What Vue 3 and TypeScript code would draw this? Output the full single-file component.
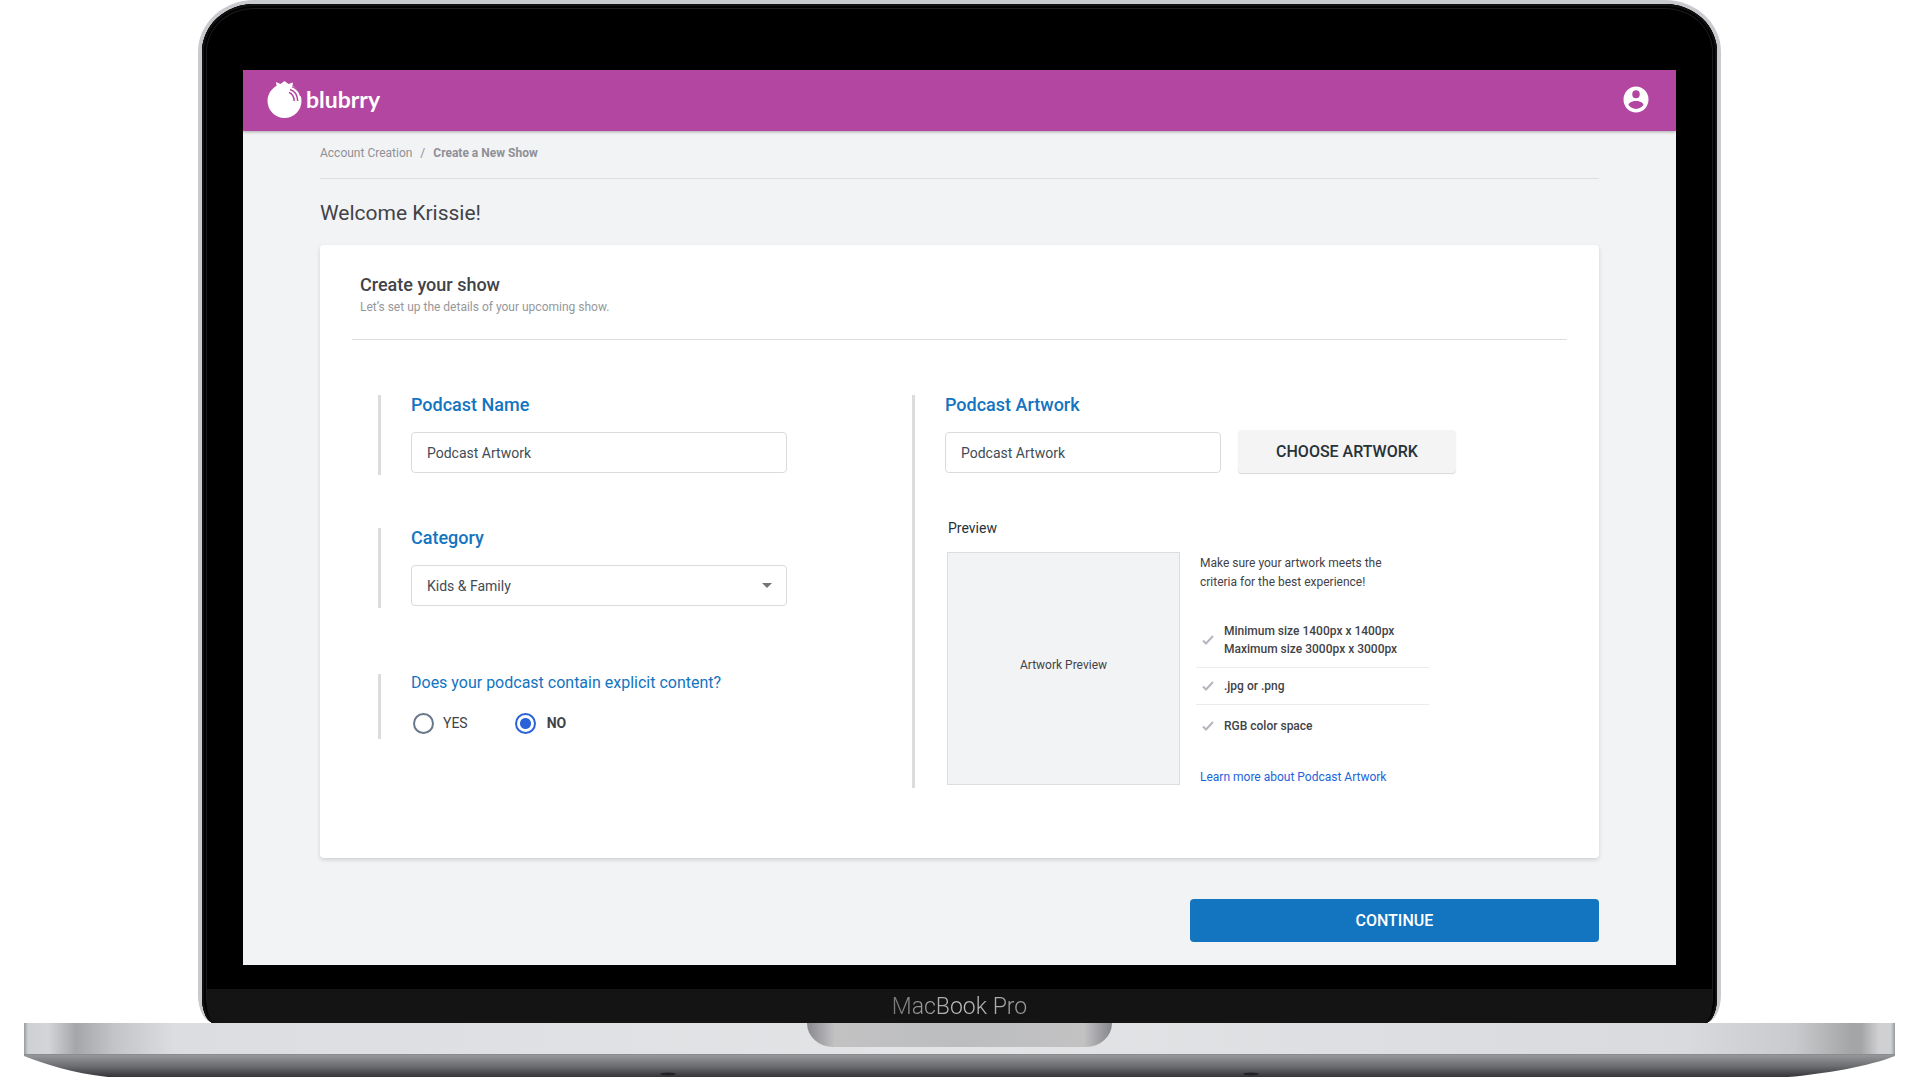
<script setup lang="ts">
import { ref } from 'vue'

interface Criterion {
  lines: string[]
}

const podcastName = ref('Podcast Artwork')
const artworkFile = ref('Podcast Artwork')
const category = ref('Kids & Family')
const explicit = ref<'yes' | 'no'>('no')

const categories: string[] = ['Kids & Family', 'Arts', 'Business', 'Comedy', 'Education']
const criteria: Criterion[] = [
  { lines: ['Minimum size 1400px x 1400px', 'Maximum size 3000px x 3000px'] },
  { lines: ['.jpg or .png'] },
  { lines: ['RGB color space'] },
]
</script>

<template>
  <div class="stage">
    <div class="lid">
      <div class="bezel">
        <div class="screen">
          <header class="topbar">
            <a class="brand" href="#" aria-label="blubrry">
              <svg class="berry" viewBox="0 0 35 37" aria-hidden="true">
                <circle cx="17.5" cy="20" r="17" fill="#fff" />
                <path d="M9 1 L13.500 3 L17.500 0 L21.500 3 L26 1.500 L25 8 L10 8 Z" fill="#fff" />
                <g fill="none" stroke="#b246a1" stroke-width="1.500">
                  <path d="M22 11.500 C25 12.500 27 16 27.200 20" />
                  <path d="M23 8.500 C28 10 30.500 14.500 30.700 20" />
                  <path d="M25 5.800 C29.500 7.500 32.500 11 33.600 15" stroke-width="1.200" />
                </g>
              </svg>
              <span class="wordmark">blubrry</span>
            </a>
            <button class="account" type="button" aria-label="Account">
              <svg viewBox="0 0 24 24" aria-hidden="true">
                <path
                  fill="#fff"
                  fill-rule="evenodd"
                  d="M12 2a10 10.400 0 1 0 0 20.800a10 10.400 0 1 0 0-20.800z M12 5a3 3.200 0 1 1 0 6.400a3 3.200 0 1 1 0-6.400z M12 13.600c3.200 0 6 1.500 6 3.200c-1.300 1.900-3.500 3.100-6 3.100s-4.700-1.200-6-3.100c0-1.700 2.800-3.200 6-3.200z"
                />
              </svg>
            </button>
          </header>

          <main class="content">
            <nav class="crumbs" aria-label="Breadcrumb">
              <a href="#">Account Creation</a>
              <span>/</span>
              <strong>Create a New Show</strong>
            </nav>
            <h1>Welcome Krissie!</h1>

            <form id="show-form" class="card" @submit.prevent>
              <div class="card-head">
                <h2>Create your show</h2>
                <p>Let’s set up the details of your upcoming show.</p>
              </div>

              <div class="columns">
                <div class="left">
                  <section class="group">
                    <label class="title" for="name">Podcast Name</label>
                    <input id="name" v-model="podcastName" class="field" type="text" />
                  </section>

                  <section class="group">
                    <label class="title" for="category">Category</label>
                    <div class="select">
                      <select id="category" v-model="category" class="field">
                        <option v-for="item in categories" :key="item">{{ item }}</option>
                      </select>
                      <svg viewBox="0 0 10 5" aria-hidden="true"><path d="M0 0h10L5 5z" fill="#757575" /></svg>
                    </div>
                  </section>

                  <fieldset class="group question">
                    <legend>Does your podcast contain explicit content?</legend>
                    <div class="radios">
                      <label><input v-model="explicit" type="radio" name="explicit" value="yes" />YES</label>
                      <label class="strong"><input v-model="explicit" type="radio" name="explicit" value="no" />NO</label>
                    </div>
                  </fieldset>
                </div>

                <section class="artwork">
                  <label class="title" for="artwork">Podcast Artwork</label>
                  <div class="chooser">
                    <input id="artwork" v-model="artworkFile" class="field" type="text" />
                    <button class="choose" type="button">CHOOSE ARTWORK</button>
                  </div>
                  <h3>Preview</h3>
                  <div class="preview-row">
                    <div class="preview">Artwork Preview</div>
                    <div class="criteria">
                      <p>Make sure your artwork meets the criteria for the best experience!</p>
                      <ul>
                        <li v-for="item in criteria" :key="item.lines[0]">
                          <svg viewBox="0 0 12 10" aria-hidden="true">
                            <path d="M1 5.500 L4 8.500 L11 1" fill="none" stroke="#b5b5c0" stroke-width="2" />
                          </svg>
                          <span><span v-for="line in item.lines" :key="line" class="line">{{ line }}</span></span>
                        </li>
                      </ul>
                      <a href="#">Learn more about Podcast Artwork</a>
                    </div>
                  </div>
                </section>
              </div>
            </form>

            <div class="actions">
              <button class="continue" type="submit" form="show-form">CONTINUE</button>
            </div>
          </main>
        </div>
        <div class="chin"><span>MacBook Pro</span></div>
      </div>
    </div>

    <div class="base">
      <div class="deck"><div class="notch"></div></div>
      <svg class="underside" viewBox="0 0 1871 22" preserveAspectRatio="none" aria-hidden="true">
        <defs>
          <linearGradient id="under" x1="0" y1="0" x2="0" y2="1">
            <stop offset="0" stop-color="#96979b" />
            <stop offset="0.500" stop-color="#6d6e72" />
            <stop offset="1" stop-color="#353538" />
          </linearGradient>
        </defs>
        <path d="M0 0 H1871 V1 C1846 11 1800 19 1764 22 H84 C48 18 20 9 0 1 Z" fill="url(#under)" />
        <ellipse cx="644" cy="19" rx="8" ry="1.500" fill="#222326" />
        <ellipse cx="1227" cy="19" rx="8" ry="1.500" fill="#222326" />
      </svg>
    </div>
  </div>
</template>

<style>
body {
  margin: 0;
  background: #fff;
}
</style>

<style scoped>
.stage {
  min-height: 100vh;
  overflow: hidden;
  font-family: Roboto, "Liberation Sans", sans-serif;
  font-size: 12px;
  color: #424347;
}
.stage *,
.stage *::before {
  box-sizing: border-box;
}
h1, h2, h3, p, ul, fieldset, legend {
  margin: 0;
  padding: 0;
}
a {
  text-decoration: none;
}
button, input, select {
  font-family: inherit;
}

/* laptop shell */
.lid {
  margin: 0 199px 0 198px;
  padding: 4px 4px 0;
  border-radius: 56px 56px 16px 16px / 52px 52px 28px 28px;
  background: #c9cace;
}
.bezel {
  overflow: hidden;
  padding-top: 66px;
  border-radius: 52px 52px 12px 12px / 48px 48px 26px 26px;
  background: #000;
  box-shadow: inset 0 0 0 2px #111, inset 0 0 0 4px #000, inset 0 0 0 5px #1c1c1e;
}
.screen {
  margin: 0 41px 24px;
  background: #f2f3f5;
}
.chin {
  display: flex;
  justify-content: center;
  margin: 0 5px;
  height: 34px;
  border-radius: 0 0 10px 10px / 0 0 16px 16px;
  background: #141414;
  font-size: 23px;
  font-weight: 300;
  line-height: 36px;
}
.chin span {
  background: linear-gradient(90deg, #777, #c4c4c4 50%, #999);
  background-clip: text;
  color: transparent;
}
.base {
  margin: 0 25px 0 24px;
}
.deck {
  display: flex;
  justify-content: center;
  height: 32px;
  border-bottom: 1px solid #8a8b8e;
  background: linear-gradient(90deg, #999a9e 0, #cfd0d3 4px, #d4d5d8 24px, #a5a6aa 52px, #c3c4c8 90px, #dcdde0 150px, #e3e4e6 50%, #d9dadd calc(100% - 210px), #c9cacd calc(100% - 100px), #a4a5a6 calc(100% - 44px), #a4a5a6 calc(100% - 34px), #d0d0d3 calc(100% - 16px), #cfd0d3 calc(100% - 4px), #97989c 100%);
}
.notch {
  width: 305px;
  height: 24px;
  border-radius: 0 0 26px 26px / 0 0 24px 24px;
  background: linear-gradient(90deg, #88888e, #c2c2c3 28px, #bcbdbf 50%, #c2c2c3 calc(100% - 28px), #85858c);
}
.underside {
  display: block;
  width: 100%;
  height: 22px;
}

/* app header */
.topbar {
  display: flex;
  align-items: center;
  justify-content: space-between;
  height: 61px;
  padding: 0 25px 3px 24px;
  background: #b246a1;
  box-shadow: 0 1px 3px rgba(0, 0, 0, 0.3);
}
.brand {
  display: flex;
  align-items: center;
  gap: 4px;
  color: #fff;
}
.berry {
  width: 35px;
  height: 37px;
}
.wordmark {
  font: 700 23px/28px Lato, sans-serif;
}
.account {
  display: flex;
  padding: 0;
  border: 0;
  background: none;
}
.account svg {
  width: 30px;
  height: 30px;
}

/* page */
.content {
  padding: 12px 77px 23px;
}
.crumbs {
  display: flex;
  gap: 8px;
  padding-bottom: 15px;
  border-bottom: 1px solid #dedfe2;
  line-height: 20px;
  color: #8f9095;
}
.crumbs a {
  color: inherit;
}
h1 {
  margin: 20px 0 18px;
  font-size: 21px;
  font-weight: 400;
  line-height: 28px;
}
.card {
  padding: 28px 32px 70px;
  border-radius: 4px;
  background: #fff;
  box-shadow: 0 2px 4px rgba(0, 0, 0, 0.14);
}
.card-head {
  padding: 0 8px 24px;
  border-bottom: 1px solid #dcdddf;
}
h2 {
  font-size: 18px;
  font-weight: 500;
  line-height: 24px;
}
.card-head p {
  margin-top: 2px;
  line-height: 16px;
  color: #96979c;
}
.columns {
  display: grid;
  grid-template-columns: 534fr 629fr;
  align-items: start;
  padding: 55px 26px 0;
}
.group,
.artwork {
  border: 0 solid #dcdcdd;
  border-left-width: 3px;
}
.group {
  margin-bottom: 53px;
  padding: 0 0 2px 30px;
}
.title {
  display: block;
  font-size: 18px;
  font-weight: 500;
  line-height: 20px;
  color: #1374c0;
}
.field {
  display: block;
  width: 100%;
  max-width: 376px;
  height: 41px;
  padding: 0 15px;
  border: 1px solid #dadbdc;
  border-radius: 4px;
  background: #fff;
  font-size: 14px;
  color: #3f4c55;
  appearance: none;
}
.group .title {
  margin-bottom: 17px;
}
.select {
  position: relative;
  max-width: 376px;
}
.select svg {
  position: absolute;
  top: 18px;
  right: 15px;
  width: 10px;
  height: 5px;
  pointer-events: none;
}
.question {
  margin: 66px 0 0;
  padding-bottom: 5px;
}
.question legend {
  float: left;
  width: 100%;
  font-size: 16px;
  line-height: 18px;
  color: #1374c0;
}
.radios {
  display: flex;
  clear: both;
  gap: 47px;
  padding: 20px 0 0 2px;
  font-size: 14px;
  line-height: 22px;
}
.radios label {
  display: flex;
  align-items: center;
  gap: 9px;
}
.radios .strong {
  gap: 11px;
  font-weight: 700;
}
.radios input {
  width: 21px;
  height: 21px;
  margin: 0;
  border: 2px solid #66788a;
  border-radius: 50%;
  background: #fff;
  appearance: none;
}
.radios input:checked {
  border-color: #2962d9;
  background: radial-gradient(circle, #2962d9 5px, #fff 6px);
}
.artwork {
  padding: 0 0 2px 30px;
}
.chooser {
  display: flex;
  align-items: flex-end;
  gap: 17px;
  margin-top: 15px;
}
.chooser .field {
  max-width: 276px;
}
.choose {
  flex: 0 0 218px;
  height: 43px;
  border: 0;
  border-radius: 4px;
  background: #f4f4f4;
  box-shadow: 0 1px 1px rgba(0, 0, 0, 0.16);
  font-size: 16px;
  font-weight: 500;
  color: #263238;
}
h3 {
  margin: 45px 0 14px 3px;
  font-size: 14px;
  font-weight: 400;
  line-height: 20px;
  color: #263238;
}
.preview-row {
  display: flex;
  align-items: flex-start;
  gap: 16px;
  margin-left: 2px;
  line-height: 18px;
}
.preview {
  display: flex;
  flex: none;
  align-items: center;
  justify-content: center;
  width: 233px;
  aspect-ratio: 1;
  padding-bottom: 8px;
  border: 1px solid #dcdddf;
  background: #f2f3f5;
}
.criteria {
  width: 233px;
  padding-top: 2px;
}
.criteria p,
.criteria > a {
  display: block;
  padding-left: 4px;
}
.criteria p {
  padding-right: 32px;
  line-height: 19px;
}
.criteria > a {
  color: #1b64dc;
}
ul {
  margin: 30px 0 33px;
  list-style: none;
}
li {
  display: flex;
  align-items: center;
  gap: 10px;
  padding: 9px 6px;
  border-bottom: 1px solid #ebebed;
  font-weight: 500;
}
li:first-child {
  padding-top: 0;
}
li:last-child {
  padding-top: 12px;
  padding-bottom: 0;
  border: 0;
}
li svg {
  width: 12px;
  height: 10px;
}
.line {
  display: block;
}
.actions {
  display: flex;
  justify-content: flex-end;
  margin-top: 41px;
}
.continue {
  width: 32%;
  height: 43px;
  border: 0;
  border-radius: 4px;
  background: #1374c0;
  font-size: 16px;
  font-weight: 500;
  color: #fff;
}
</style>
